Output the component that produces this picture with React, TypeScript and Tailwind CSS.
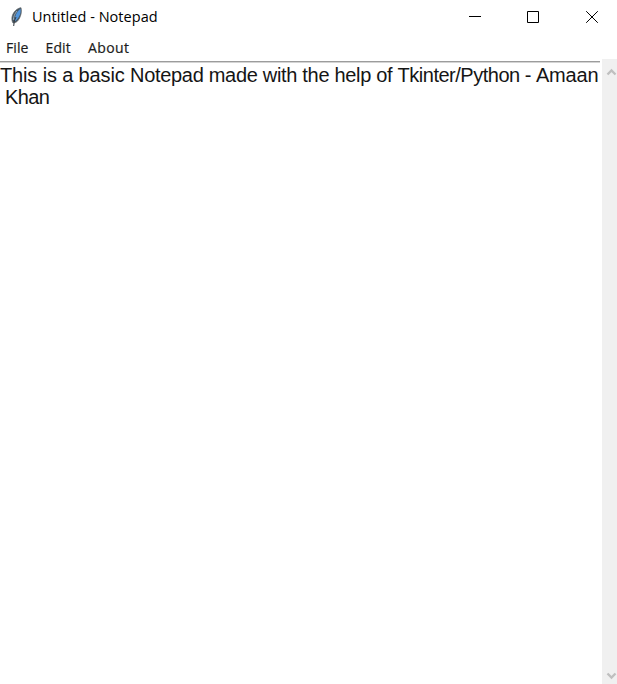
export default function App() {
  return (
    <div className="flex h-[684px] w-[617px] flex-col overflow-hidden bg-white text-black">
      <header className="flex h-[34px] shrink-0 items-center pl-[10px]">
        <svg width="14" height="20" viewBox="0 0 14 20" className="shrink-0">
          <path d="M11 .7C7 1.2 3 5 2 10C1.7 12.500 2 14.500 3 16C5 16 7 15 8 13.500C10.500 10.500 12.200 5 11 .7Z" fill="#475560" stroke="#5e666c" strokeWidth=".7" />
          <path d="M10.500 1.800C7.500 4 4.800 8 4.300 14.500C8.500 12 11.500 7 10.500 1.800Z" fill="#4f94dc" />
          <path d="M7 4C4.500 7 3.500 10 3.300 13" fill="none" stroke="#9aaab5" strokeWidth="1" />
          <path d="M6 10L4.300 14L3.700 19" fill="none" stroke="#34393f" strokeWidth="1" />
        </svg>
        <h1 className="ml-2 whitespace-nowrap font-['Open_Sans',sans-serif] text-[14.5px] leading-5 tracking-[0.03px]">Untitled - Notepad</h1>
        <div className="ml-auto flex h-full">
          <button aria-label="Minimize" className="flex w-[58px] items-center justify-center"><svg width="12" height="12"><path d="M0 5.500H12" stroke="#000" /></svg></button>
          <button aria-label="Maximize" className="flex w-[58px] items-center justify-center"><svg width="12" height="12"><path d="M.5 .5H11.5V11.5H.5Z" fill="none" stroke="#000" /></svg></button>
          <button aria-label="Close" className="flex w-[55px] items-center justify-center pl-[5px]"><svg width="12" height="12"><path d="M.2 .2L11.800 11.800M11.800 .2L.2 11.800" stroke="#000" strokeWidth="1" /></svg></button>
        </div>
      </header>
      <div className="flex min-h-0 flex-1">
        <div className="w-[600px]">
          <nav className="flex h-[27px] items-center pl-[6px] font-['Open_Sans',sans-serif] text-[14px] text-[#1c1c1c] [-webkit-text-stroke:0.2px_#1c1c1c]">
            <span className="w-[39.500px] tracking-[0.1px]">File</span>
            <span className="w-[42.500px] tracking-[0.1px]">Edit</span>
            <span className="tracking-[0.4px]">About</span>
          </nav>
          <main className="whitespace-pre border-t border-[#9c9c9c] pt-[2px] font-['Liberation_Sans',sans-serif] text-[20px] leading-[22px] text-[#151515] shadow-[inset_0_1px_0_#d4d4d4]">
            <p><span className="tracking-[-0.14px]">This is a basic </span><span className="tracking-[-0.31px]">Notepad made with the help of </span><span className="tracking-[-0.49px]">Tkinter/Python - </span><span className="tracking-[-0.2px]">Amaan</span></p>
            <p className="tracking-[-0.6px]"> Khan</p>
          </main>
        </div>
        <div className="ml-auto mt-[25px] flex w-[15px] flex-col items-end justify-between bg-[#f0f0f0] pb-[4px] pt-[9px]">
          <svg width="11" height="8"><path d="M1.500 6.500L5.500 2.500L9.500 6.500" fill="none" stroke="#bfbfbf" strokeWidth="2.300" /></svg>
          <svg width="11" height="8"><path d="M1.500 1.500L5.500 5.500L9.500 1.500" fill="none" stroke="#bfbfbf" strokeWidth="2.300" /></svg>
        </div>
      </div>
    </div>
  );
}
